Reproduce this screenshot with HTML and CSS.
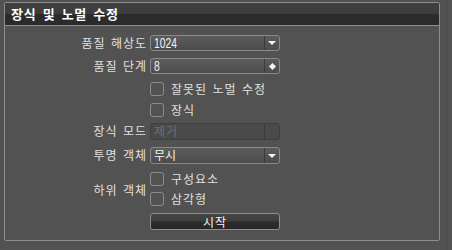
FILE: index.html
```html
<!DOCTYPE html>
<html lang="ko">
<head>
    <meta charset="UTF-8">
    <title>장식 및 노멀 수정</title>
    <link rel="stylesheet" href="styles.css">
</head>
<body>
    <div class="panel">
        <div class="panel-header">장식 및 노멀 수정</div>

        <!-- Options -->
        <div class="form">
            <div class="label">품질 해상도</div>
            <div class="select">
                <span class="select-value"><span class="num">1024</span></span>
                <span class="select-btn"><span class="arrow"></span></span>
            </div>

            <div class="label">품질 단계</div>
            <div class="select">
                <span class="select-value"><span class="num">8</span></span>
                <span class="select-btn"><span class="diamond"></span></span>
            </div>

            <div class="label"></div>
            <label class="check"><span class="box"></span>잘못된 노멀 수정</label>

            <div class="label"></div>
            <label class="check"><span class="box"></span>장식</label>

            <div class="label">장식 모드</div>
            <div class="select select-disabled">
                <span class="select-value">제거</span>
                <span class="select-btn"></span>
            </div>

            <div class="label">투명 객체</div>
            <div class="select select-tall">
                <span class="select-value">무시</span>
                <span class="select-btn"><span class="arrow"></span></span>
            </div>

            <div class="label label-sub">하위 객체</div>
            <label class="check"><span class="box"></span>구성요소</label>
            <label class="check"><span class="box"></span>삼각형</label>

            <div class="label"></div>
            <button class="btn" type="button">시작</button>
        </div>
    </div>
    <div class="edge"></div>
</body>
</html>
```

FILE: styles.css
```css
body {
    margin: 0;
    background-color: #525252;
    font-family: "Noto Sans CJK KR", "Noto Sans", sans-serif;
    font-size: 12px;
    letter-spacing: 1px;
    word-spacing: 1px;
    color: #e0e0e0;
}

.panel {
    position: absolute;
    left: 4px;
    top: 2px;
    width: 434px;
    height: 237px;
    border: 1px solid #8e8e8e;
    border-radius: 2px;
}

.edge {
    position: absolute;
    left: 446px;
    top: 0;
    width: 1px;
    height: 250px;
    background-color: #4a4a4a;
}

.panel-header {
    height: 22px;
    line-height: 22px;
    padding-left: 6px;
    border-bottom: 1px solid #8e8e8e;
    background: linear-gradient(#404040 0, #3c3c3c 50%, #2b2b2b 50%, #2b2b2b 100%);
    color: #ffffff;
    font-size: 13px;
    font-weight: bold;
    letter-spacing: 0.7px;
    word-spacing: 2px;
}

.form {
    display: grid;
    grid-template-columns: 142px 130px;
    grid-template-rows: 23px 24px 21px 20px 24px 25px 20px 21px 17px;
    column-gap: 3px;
    align-items: start;
    padding-top: 9px;
}

.label {
    text-align: right;
    line-height: 16px;
    height: 16px;
}

.label-sub {
    grid-row: span 2;
    margin-top: 10px;
}

.select {
    display: flex;
    height: 14px;
    border: 1px solid #8a8a8a;
    border-radius: 3px;
    background: linear-gradient(#5c5c5c, #4c4c4c);
    color: #f2f2f2;
}

.select-tall {
    height: 15px;
}

.select-value {
    flex: 1;
    padding-left: 3px;
    line-height: 14px;
    letter-spacing: 0;
}

.num {
    display: inline-block;
    font-family: "Liberation Sans", sans-serif;
    font-size: 14px;
    transform: scaleX(0.74);
    transform-origin: left center;
}

.select-btn {
    width: 14px;
    border-left: 1px solid #3a3a3a;
    display: flex;
    align-items: center;
    justify-content: center;
}

.arrow {
    width: 0;
    height: 0;
    border-left: 4px solid transparent;
    border-right: 4px solid transparent;
    border-top: 4px solid #f4f4f4;
}

.diamond {
    width: 5px;
    height: 5px;
    background-color: #f4f4f4;
    transform: rotate(45deg);
}

.select-disabled {
    height: 15px;
    border-color: #3e3e3e;
    background: #4a4a4a;
    color: #707070;
}

.select-disabled .select-value {
    letter-spacing: 1px;
}

.check {
    display: flex;
    align-items: center;
    gap: 7px;
    height: 14px;
    line-height: 14px;
}

.box {
    width: 12px;
    height: 12px;
    border: 1px solid #8c8c8c;
    border-radius: 3px;
}

.btn {
    height: 17px;
    padding: 0;
    border: 1px solid #8e8e8e;
    border-radius: 3px;
    background: linear-gradient(#444444 0, #3e3e3e 45%, #2c2c2c 55%, #262626 100%);
    color: #f4f4f4;
    font-family: "Noto Sans CJK KR", "Noto Sans", sans-serif;
    font-size: 12px;
    letter-spacing: 1px;
    line-height: 15px;
}
```
